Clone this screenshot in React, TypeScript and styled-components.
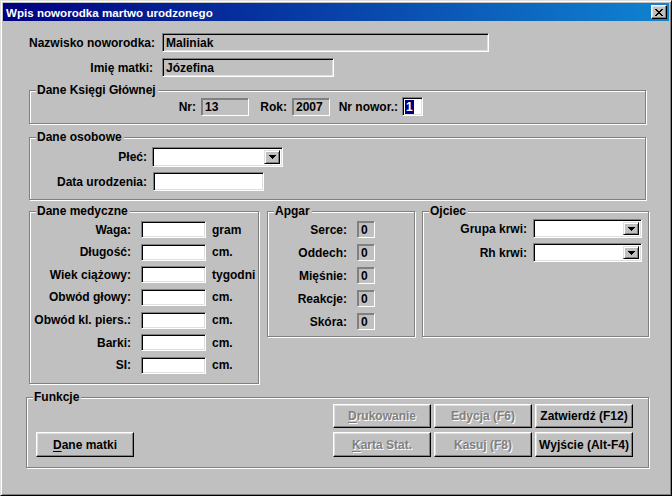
import React from "react";
import styled, { createGlobalStyle } from "styled-components";

const Global = createGlobalStyle`
  html, body { margin: 0; padding: 0; background: #c0c0c0; }
  * { box-sizing: border-box; }
`;

const FONT = `"Liberation Sans", Arial, sans-serif`;

const Window = styled.div`
  width: 672px;
  height: 496px;
  background: #c0c0c0;
  border: 1px solid;
  border-color: #dfdfdf #000 #000 #dfdfdf;
  box-shadow: inset 1px 1px #fff, inset -1px -1px #808080;
  padding: 2px;
  display: flex;
  flex-direction: column;
  font-family: ${FONT};
  font-weight: bold;
  font-size: 12px;
  color: #000;
`;

const TitleBar = styled.div`
  height: 18px;
  flex: none;
  background: linear-gradient(90deg, #000080 0%, #1084d0 100%);
  display: flex;
  align-items: center;
  justify-content: space-between;
  padding: 0 2px 0 3px;
`;

const TitleText = styled.span`
  color: #fff;
  font-weight: bold;
  font-size: 11.6px;
`;

const CloseBtn = styled.div`
  width: 16px;
  height: 14px;
  background: #c0c0c0;
  border: 1px solid;
  border-color: #fff #000 #000 #fff;
  box-shadow: inset -1px -1px #808080, inset 1px 1px #dfdfdf;
  display: flex;
  align-items: center;
  justify-content: center;
`;

const Body = styled.div`
  flex: 1;
  display: flex;
  flex-direction: column;
  padding-top: 12px;
`;

const TopRows = styled.div`
  display: flex;
  flex-direction: column;
  gap: 6px;
  padding-left: 26px;
`;

const Row = styled.div<{ $gap?: number }>`
  display: flex;
  align-items: center;
  gap: ${(p) => p.$gap ?? 0}px;
`;

const Label = styled.span<{ $w: number; $mr?: number }>`
  width: ${(p) => p.$w}px;
  margin-right: ${(p) => p.$mr ?? 0}px;
  text-align: right;
  white-space: nowrap;
  flex: none;
`;

const Unit = styled.span<{ $ml: number }>`
  margin-left: ${(p) => p.$ml}px;
  white-space: nowrap;
`;

const Field = styled.div<{ $w: number; $h: number; $bg?: string; $flat?: boolean }>`
  width: ${(p) => p.$w}px;
  height: ${(p) => p.$h}px;
  flex: none;
  background: ${(p) => p.$bg ?? "#fff"};
  border: 1px solid;
  border-color: #808080 #fff #fff #808080;
  box-shadow: ${(p) =>
    p.$flat ? "inset 1px 1px #808080" : "inset 1px 1px #000, inset -1px -1px #dfdfdf"};
  display: flex;
  align-items: center;
  padding-left: 3px;
  white-space: nowrap;
`;

const Selected = styled.span`
  background: #000080;
  color: #fff;
  padding: 0 1px;
  line-height: 14px;
  margin-left: -1px;
`;

const Combo = styled.div<{ $w: number; $h: number }>`
  width: ${(p) => p.$w}px;
  height: ${(p) => p.$h}px;
  flex: none;
  background: #fff;
  border: 1px solid;
  border-color: #808080 #fff #fff #808080;
  box-shadow: inset 1px 1px #000, inset -1px -1px #dfdfdf;
  display: flex;
  justify-content: flex-end;
  padding: 2px;
`;

const DropBtn = styled.div`
  width: 16px;
  height: 100%;
  background: #c0c0c0;
  border: 1px solid;
  border-color: #dfdfdf #000 #000 #dfdfdf;
  box-shadow: inset 1px 1px #fff, inset -1px -1px #808080;
  display: flex;
  align-items: center;
  justify-content: center;
`;

const Group = styled.div<{ $w: number; $h: number; $ml?: number; $mt?: number }>`
  position: relative;
  flex: none;
  width: ${(p) => p.$w}px;
  height: ${(p) => p.$h}px;
  margin-left: ${(p) => p.$ml ?? 0}px;
  margin-top: ${(p) => p.$mt ?? 0}px;
  border: 1px solid #808080;
  box-shadow: inset 1px 1px #fff, 1px 1px #fff;
`;

const Legend = styled.span`
  position: absolute;
  top: -8px;
  left: 6px;
  padding: 0 2px 0 1px;
  line-height: 14px;
  background: #c0c0c0;
  white-space: nowrap;
`;

const GroupBody = styled.div<{ $pt: number; $pl?: number; $gap?: number }>`
  display: flex;
  flex-direction: column;
  padding-top: ${(p) => p.$pt}px;
  padding-left: ${(p) => p.$pl ?? 0}px;
  gap: ${(p) => p.$gap ?? 0}px;
`;

const MedRow = styled.div`
  display: flex;
  align-items: flex-start;
  margin-top: 11px;
  margin-left: 26px;
`;

const FuncBody = styled.div`
  display: flex;
  align-items: flex-end;
  justify-content: space-between;
  padding: 6px 15px 0 9px;
`;

const BtnGrid = styled.div`
  display: grid;
  grid-template-columns: repeat(3, 98px);
  grid-template-rows: 24px 25px;
  column-gap: 3px;
  row-gap: 4px;
`;

const Btn = styled.div<{ $off?: boolean; $w?: number; $h?: number }>`
  width: ${(p) => p.$w ?? 98}px;
  height: ${(p) => (p.$h ? `${p.$h}px` : "100%")};
  background: #c0c0c0;
  border: 1px solid;
  border-color: #fff #000 #000 #fff;
  box-shadow: inset -1px -1px #808080, inset 1px 1px #dfdfdf;
  display: flex;
  align-items: center;
  justify-content: center;
  white-space: nowrap;
  color: ${(p) => (p.$off ? "#808080" : "#000")};
  text-shadow: ${(p) => (p.$off ? "1px 1px #fff" : "none")};
  u {
    text-decoration-thickness: 1px;
    text-underline-offset: 2px;
  }
`;

const CloseIcon = () => (
  <svg width="8" height="7" viewBox="0 0 8 7" shapeRendering="crispEdges">
    <path
      fill="#000"
      d="M0 0h2v1H0zM6 0h2v1H6zM1 1h2v1H1zM5 1h2v1H5zM2 2h4v1H2zM3 3h2v1H3zM2 4h4v1H2zM1 5h2v1H1zM5 5h2v1H5zM0 6h2v1H0zM6 6h2v1H6z"
    />
  </svg>
);

const Arrow = () => (
  <svg width="7" height="4" viewBox="0 0 7 4" shapeRendering="crispEdges">
    <path fill="#000" d="M0 0h7v1H0zM1 1h5v1H1zM2 2h3v1H2zM3 3h1v1H3z" />
  </svg>
);

const medRows: [string, string][] = [
  ["Waga:", "gram"],
  ["Długość:", "cm."],
  ["Wiek ciążowy:", "tygodni"],
  ["Obwód głowy:", "cm."],
  ["Obwód kl. piers.:", "cm."],
  ["Barki:", "cm."],
  ["SI:", "cm."],
];

const apgarRows = ["Serce:", "Oddech:", "Mięśnie:", "Reakcje:", "Skóra:"];

export default function App() {
  return (
    <>
      <Global />
      <Window>
        <TitleBar>
          <TitleText>Wpis noworodka martwo urodzonego</TitleText>
          <CloseBtn>
            <CloseIcon />
          </CloseBtn>
        </TitleBar>
        <Body>
          <TopRows>
            <Row>
              <Label $w={124} $mr={9}>Nazwisko noworodka:</Label>
              <Field $w={327} $h={19} $bg="#c0c0c0">Maliniak</Field>
            </Row>
            <Row>
              <Label $w={124} $mr={9}>Imię matki:</Label>
              <Field $w={172} $h={19} $bg="#c0c0c0">Józefina</Field>
            </Row>
          </TopRows>

          <Group $w={617} $h={34} $ml={26} $mt={13}>
            <Legend>Dane Księgi Głównej</Legend>
            <GroupBody $pt={6} $pl={120}>
              <Row>
                <Label $w={46} $mr={5}>Nr:</Label>
                <Field $w={48} $h={18} $bg="#c0c0c0" $flat>13</Field>
                <Label $w={38} $mr={5}>Rok:</Label>
                <Field $w={38} $h={18} $bg="#c0c0c0" $flat>2007</Field>
                <Label $w={68} $mr={4}>Nr nowor.:</Label>
                <Field $w={21} $h={19}>
                  <Selected>1</Selected>
                </Field>
              </Row>
            </GroupBody>
          </Group>

          <Group $w={617} $h={63} $ml={26} $mt={13}>
            <Legend>Dane osobowe</Legend>
            <GroupBody $pt={9} $gap={5}>
              <Row>
                <Label $w={117} $mr={5}>Płeć:</Label>
                <Combo $w={131} $h={20}>
                  <DropBtn>
                    <Arrow />
                  </DropBtn>
                </Combo>
              </Row>
              <Row>
                <Label $w={117} $mr={6}>Data urodzenia:</Label>
                <Field $w={111} $h={19} />
              </Row>
            </GroupBody>
          </Group>

          <MedRow>
            <Group $w={230} $h={173}>
              <Legend>Dane medyczne</Legend>
              <GroupBody $pt={9} $gap={5.67}>
                {medRows.map(([l, u]) => (
                  <Row key={l}>
                    <Label $w={101} $mr={10}>{l}</Label>
                    <Field $w={65} $h={17} />
                    <Unit $ml={6}>{u}</Unit>
                  </Row>
                ))}
              </GroupBody>
            </Group>

            <Group $w={148} $h={126} $ml={8}>
              <Legend>Apgar</Legend>
              <GroupBody $pt={9} $gap={6}>
                {apgarRows.map((l) => (
                  <Row key={l}>
                    <Label $w={79} $mr={10}>{l}</Label>
                    <Field $w={18} $h={17} $bg="#c0c0c0" $flat>0</Field>
                  </Row>
                ))}
              </GroupBody>
            </Group>

            <Group $w={227} $h={126} $ml={7}>
              <Legend>Ojciec</Legend>
              <GroupBody $pt={7} $gap={5}>
                <Row>
                  <Label $w={104} $mr={6}>Grupa krwi:</Label>
                  <Combo $w={109} $h={19}>
                    <DropBtn>
                      <Arrow />
                    </DropBtn>
                  </Combo>
                </Row>
                <Row>
                  <Label $w={104} $mr={6}>Rh krwi:</Label>
                  <Combo $w={109} $h={19}>
                    <DropBtn>
                      <Arrow />
                    </DropBtn>
                  </Combo>
                </Row>
              </GroupBody>
            </Group>
          </MedRow>

          <Group $w={623} $h={71} $ml={23} $mt={13}>
            <Legend>Funkcje</Legend>
            <FuncBody>
              <Btn $h={25}>
                <span>
                  <u>D</u>ane matki
                </span>
              </Btn>
              <BtnGrid>
                <Btn $off>
                  <span>
                    <u>D</u>rukowanie
                  </span>
                </Btn>
                <Btn $off>Edycja (F6)</Btn>
                <Btn>Zatwierdź (F12)</Btn>
                <Btn $off>
                  <span>
                    <u>K</u>arta Stat.
                  </span>
                </Btn>
                <Btn $off>Kasuj (F8)</Btn>
                <Btn>Wyjście (Alt-F4)</Btn>
              </BtnGrid>
            </FuncBody>
          </Group>
        </Body>
      </Window>
    </>
  );
}
